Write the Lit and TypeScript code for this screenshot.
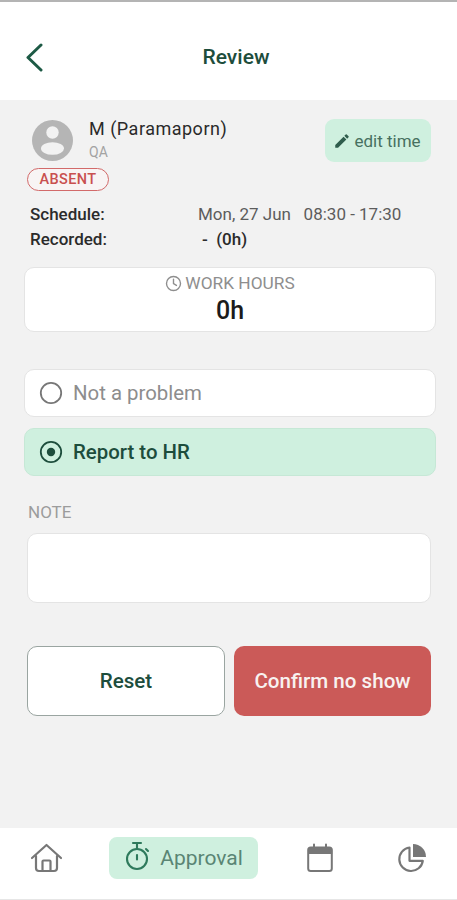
import { LitElement, html, css } from "lit";
import { customElement } from "lit/decorators.js";

@customElement("app-root")
export class AppRoot extends LitElement {
  static styles = css`
    :host { display: block; width: 457px; height: 900px; font-family: Roboto, "Liberation Sans", sans-serif; background: #f2f2f2; color: #222; overflow: hidden; }
    .page { height: 900px; display: flex; flex-direction: column; }
    .statusline { height: 2px; background: #b4b4b4; flex: none; }
    header { height: 98px; flex: none; background: #fff; display: flex; align-items: center; justify-content: center; position: relative; padding-top: 13px; box-sizing: border-box; }
    header svg { position: absolute; left: 24px; top: 40px; }
    header h1 { margin: 0; font-size: 21px; font-weight: 500; color: #1d4d3c; margin-left: 15px; line-height: 24px; margin-top: -2px; }
    main { flex: 1; display: flex; flex-direction: column; min-height: 0; }
    .profile { display: flex; height: 68px; padding: 15px 26px 0 27px; box-sizing: border-box; justify-content: space-between; flex: none; position: relative; }
    .who { display: flex; gap: 16px; padding-left: 5px; padding-top: 5px; }
    .avatar { width: 41px; height: 41px; flex: none; display: block; }
    .name { font-size: 18px; line-height: 24px; letter-spacing: 0.5px; color: #2a2a2a; margin-top: -3px; }
    .role { font-size: 14px; line-height: 17px; color: #a3a3a3; margin-top: 3px; }
    .edit { width: 106px; height: 43px; margin-top: 4px; background: #cff0df; border-radius: 9px; display: flex; align-items: center; justify-content: center; gap: 3px; color: #47705f; font-size: 17px; padding-right: 2px; box-sizing: border-box; }
    .absent { position: absolute; left: 27px; top: 68px; width: 82px; height: 23px; box-sizing: border-box; border: 1.5px solid #d26a6a; border-radius: 12px; background: #f8f4f4; color: #c9504f; font-size: 14.5px; font-weight: 500; display: flex; align-items: center; justify-content: center; letter-spacing: 0.4px; }
    .times { margin-top: 37px; padding-left: 30px; display: grid; grid-template-columns: 168px 1fr; row-gap: 7px; font-size: 17px; line-height: 18px; flex: none; }
    .lab { font-weight: 500; color: #2b2b2b; font-size: 17px; }
    .val { color: #5c5c5c; white-space: pre; }
    .rec { font-weight: 500; color: #2b2b2b; white-space: pre; padding-left: 4px; }
    .card { background: #fff; border: 1px solid #e4e4e4; border-radius: 10px; box-sizing: border-box; flex: none; }
    .hours { margin: 19px 21px 0 24px; height: 65px; display: flex; flex-direction: column; align-items: center; padding-top: 6px; }
    .hl { display: flex; align-items: center; gap: 3px; color: #8e8e8e; font-size: 17.3px; line-height: 19px; }
    .hv { font-size: 25px; font-weight: 500; color: #1b1b1b; line-height: 28px; margin-top: 4px; }
    .opt { margin: 0 21px 0 24px; height: 48px; display: flex; align-items: center; gap: 10px; padding-left: 14px; font-size: 20.4px; }
    .opt.a { margin-top: 37px; color: #8d8d8d; }
    .opt.b { margin-top: 11px; background: #cff0df; border: 1px solid #c6e8d6; color: #1d4d3c; font-weight: 500; }
    .notel { margin: 27px 0 0 28px; font-size: 17px; line-height: 18px; color: #9c9c9c; flex: none; }
    .note { margin: 12px 26px 0 27px; height: 70px; }
    .btns { display: flex; gap: 9px; margin: 43px 26px 0 27px; flex: none; }
    .btn { height: 70px; box-sizing: border-box; border-radius: 10px; display: flex; align-items: center; justify-content: center; font-size: 20.6px; font-weight: 500; }
    .reset { width: 198px; background: #fff; border: 1px solid #9aa5a1; color: #1d4d3c; }
    .confirm { width: 197px; background: #cb5a58; color: #f8f2f0; }
    nav { height: 71px; flex: none; background: #fff; border-bottom: 1px solid #e6e6e6; display: flex; align-items: flex-start; }
    .nav-i { display: flex; align-items: center; justify-content: center; height: 42px; margin-top: 9px; flex: none; }
    .home { margin-left: 30px; width: 33px; }
    .pill { margin-left: 46px; width: 149px; background: #cff0df; border-radius: 8px; gap: 10px; color: #5a8574; font-size: 21px; }
    .cal { margin-left: 47px; width: 30px; }
    .pie { margin-left: 62px; width: 30px; }
    .up { margin-top: -4px; }
  `;

  render() {
    return html`
      <div class="page">
        <div class="statusline"></div>
        <header>
          <svg width="22" height="30" viewBox="0 0 22 30" fill="none" stroke="#1d5a45" stroke-width="3" stroke-linecap="round" stroke-linejoin="round"><path d="M17 3 4 15.500 17 28"/></svg>
          <h1>Review</h1>
        </header>
        <main>
          <div class="profile">
            <div class="who">
              <svg class="avatar" viewBox="0 0 41 41"><circle cx="20.500" cy="20.500" r="20.500" fill="#b5b5b5"/><circle cx="20.500" cy="12.500" r="6.200" fill="#f2f2f2"/><ellipse cx="20.500" cy="28.500" rx="11.500" ry="6.300" fill="#f2f2f2"/></svg>
              <div>
                <div class="name">M (Paramaporn)</div>
                <div class="role">QA</div>
              </div>
            </div>
            <div class="edit">
              <svg width="18" height="18" viewBox="0 0 24 24" fill="#2f5d4c"><path d="M3 17.250V21h3.750L17.810 9.940l-3.750-3.750L3 17.250zM20.710 7.040a1 1 0 0 0 0-1.410l-2.340-2.340a1 1 0 0 0-1.410 0l-1.830 1.830 3.750 3.750 1.830-1.830z"/></svg>
              <span>edit time</span>
            </div>
            <div class="absent">ABSENT</div>
          </div>
          <div class="times">
            <div class="lab">Schedule:</div><div class="val">Mon, 27 Jun   08:30 - 17:30</div>
            <div class="lab">Recorded:</div><div class="rec">-  (0h)</div>
          </div>
          <div class="card hours">
            <div class="hl">
              <svg width="17" height="17" viewBox="0 0 16 16" fill="none" stroke="#8e8e8e" stroke-width="1.300" stroke-linecap="round"><circle cx="8" cy="8" r="6.600"/><path d="M8 4v4.200l2.800 1.600"/></svg>
              <span>WORK HOURS</span>
            </div>
            <div class="hv">0h</div>
          </div>
          <div class="card opt a">
            <svg width="24" height="24" viewBox="0 0 24 24" fill="none" stroke="#777" stroke-width="1.800"><circle cx="12" cy="12" r="10.200"/></svg>
            <span>Not a problem</span>
          </div>
          <div class="card opt b">
            <svg width="24" height="24" viewBox="0 0 24 24" fill="none" stroke="#1d4d3c" stroke-width="1.800"><circle cx="12" cy="12" r="10.200"/><circle cx="12" cy="12" r="4.200" fill="#1d4d3c" stroke="none"/></svg>
            <span>Report to HR</span>
          </div>
          <div class="notel">NOTE</div>
          <div class="card note"></div>
          <div class="btns">
            <div class="btn reset">Reset</div>
            <div class="btn confirm">Confirm no show</div>
          </div>
        </main>
        <nav>
          <div class="nav-i home">
            <svg width="33" height="30" viewBox="0 0 33 30" fill="none" stroke="#777" stroke-width="2.200" stroke-linejoin="round" stroke-linecap="round"><path d="M2 15 16.500 2 31 15"/><path d="M6 13v12a3 3 0 0 0 3 3h15a3 3 0 0 0 3-3V13"/><path d="M12.500 28V18.500a1 1 0 0 1 1-1h6a1 1 0 0 1 1 1V28"/></svg>
          </div>
          <div class="nav-i pill">
            <svg class="up" width="26" height="31" viewBox="0 0 26 31" fill="none" stroke="#2e7a5c" stroke-width="2.100" stroke-linecap="round"><circle cx="13" cy="18" r="10"/><path d="M9 2h8M13 2v6M22 8l2 2"/><path d="M13 14v4.500"/></svg>
            <span>Approval</span>
          </div>
          <div class="nav-i cal">
            <svg width="26" height="30" viewBox="0 0 26 30" fill="none" stroke="#777" stroke-width="2"><rect x="1.200" y="4.500" width="23.600" height="23.500" rx="2.500"/><path d="M1.200 7a2.500 2.500 0 0 1 2.500-2.500h19a2.500 2.500 0 0 1 2.500 2.500v4H1.200z" fill="#777" stroke="none"/><path d="M7 1.500v4M19 1.500v4" stroke-linecap="round"/></svg>
          </div>
          <div class="nav-i pie">
            <svg width="30" height="30" viewBox="0 0 30 30" fill="none" stroke="#777" stroke-width="2.200"><path d="M12.500 4.500a11.800 11.800 0 1 0 13.300 13.300H12.500z" stroke-linejoin="round"/><path d="M16 1a13 13 0 0 1 13 13H16z" fill="#777" stroke="none"/></svg>
          </div>
        </nav>
      </div>
    `;
  }
}
